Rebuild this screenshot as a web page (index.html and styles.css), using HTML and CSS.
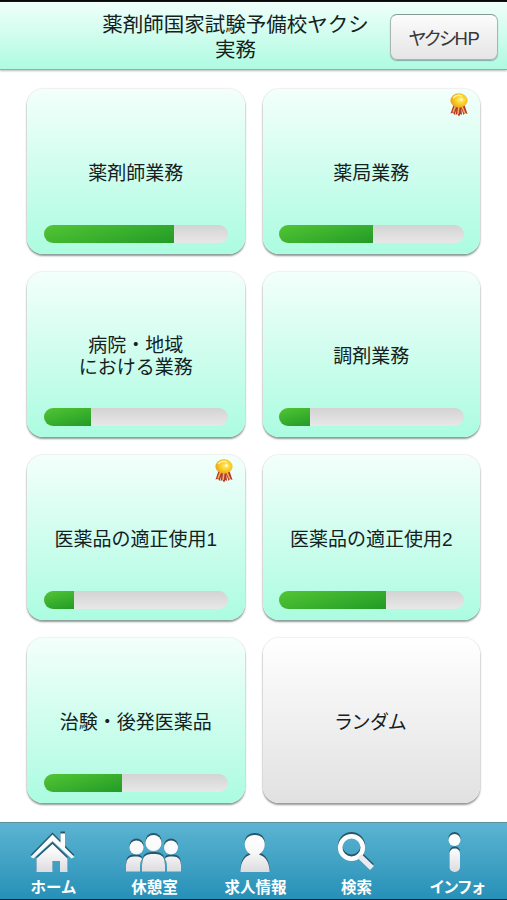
FILE: index.html
```html
<!DOCTYPE html>
<html lang="ja">
<head>
<meta charset="utf-8">
<title>実務</title>
<link rel="stylesheet" href="styles.css">
</head>
<body>
<svg class="defs" width="0" height="0" aria-hidden="true">
  <defs>
    <linearGradient id="silver" gradientUnits="userSpaceOnUse" x1="0" y1="3" x2="0" y2="42"><stop offset="0" stop-color="#fff"/><stop offset=".45" stop-color="#fafafa"/><stop offset="1" stop-color="#dcdce0"/></linearGradient>
    <radialGradient id="gold" cx=".6" cy=".45" r=".6"><stop offset="0" stop-color="#fff08a"/><stop offset=".45" stop-color="#fbd32c"/><stop offset="1" stop-color="#eba31a"/></radialGradient>
    <symbol id="medal" viewBox="0 0 20 24">
      <path d="M4.500 12L1.500 20.500L4 19.800L5.500 22L8.500 14ZM8 13L6.500 22L8.500 21L10 23.500L11.500 21L13 22L12 13ZM11.500 13L14.500 22L16 20L18.500 21L15.500 12Z" fill="#b5382a"/>
      <path d="M6.500 13L4 19.500M9.800 14L9 21M12.800 13L15.800 20" stroke="#f0b05a" stroke-width="1.600"/>
      <ellipse cx="10" cy="7.500" rx="8.600" ry="7.200" fill="url(#gold)"/>
      <path d="M4 5Q8 1 13 3" stroke="#fff3a8" stroke-width="1.500" fill="none"/>
      <circle cx="12.500" cy="6.500" r="1.300" fill="#fffbd8"/>
    </symbol>
  </defs>
</svg>
<div class="app">
  <header class="header">
    <h1 class="title">薬剤師国家試験予備校ヤクシ<br>実務</h1>
    <button class="site">ヤクシ<span class="latin">HP</span></button>
  </header>
  <main class="grid">
    <a class="card"><span class="name">薬剤師業務</span><span class="bar"><i class="fill" style="width:130.500px"></i></span></a>
    <a class="card"><svg class="medal"><use href="#medal"/></svg><span class="name">薬局業務</span><span class="bar"><i class="fill" style="width:93.500px"></i></span></a>
    <a class="card"><span class="name">病院・地域<br>における業務</span><span class="bar"><i class="fill" style="width:47px"></i></span></a>
    <a class="card"><span class="name">調剤業務</span><span class="bar"><i class="fill" style="width:30.500px"></i></span></a>
    <a class="card"><svg class="medal"><use href="#medal"/></svg><span class="name">医薬品の適正使用1</span><span class="bar"><i class="fill" style="width:30px"></i></span></a>
    <a class="card"><span class="name">医薬品の適正使用2</span><span class="bar"><i class="fill" style="width:107px"></i></span></a>
    <a class="card"><span class="name">治験・後発医薬品</span><span class="bar"><i class="fill" style="width:78.500px"></i></span></a>
    <a class="card random"><span class="name kana">ランダム</span></a>
  </main>
  <nav class="tabs">
    <a class="tab"><svg class="icon" viewBox="0 0 60 44" fill="url(#silver)"><path d="M6.500 27L28.500 4.500L36.500 12.500V3.500H41V17.500L50.500 27L47.500 28.500L28.500 11L9.500 28.500Z"/><path d="M12.500 28.500L28.500 14L43.500 28.500V42H36V31H28.500V42H12.500Z"/></svg><span>ホーム</span></a>
    <a class="tab"><svg class="icon shift" viewBox="0 0 60 44" fill="url(#silver)"><circle cx="12.500" cy="17.500" r="7"/><circle cx="47" cy="17.500" r="7"/><path d="M2 41.500V35Q2 26.500 10 26.500H13Q17 26.500 18 29Q16 31.500 16 37V41.500ZM57 41.500V35Q57 26.500 49 26.500H46Q42 26.500 41 29Q43 31.500 43 37V41.500Z"/><circle cx="29.500" cy="13" r="8"/><path d="M18 41.500V35Q18 24 27 24H32Q41 24 41 35V41.500Z"/></svg><span>休憩室</span></a>
    <a class="tab"><svg class="icon shift" viewBox="0 0 60 44" fill="url(#silver)"><path d="M15.500 42C15.500 31 20 26.500 25.500 24.500C17 19 17.500 5 29.800 5C42 5 42.500 19 34 24.500C40 26.500 44.500 31 44.500 42Z"/></svg><span>求人情報</span></a>
    <a class="tab"><svg class="icon shift" viewBox="0 0 60 44"><circle cx="25.500" cy="17.500" r="11.300" fill="none" stroke="#fcfcfc" stroke-width="4.600"/><path d="M33.500 26L46 38" stroke="#e9e9ee" stroke-width="5.500"/></svg><span>検索</span></a>
    <a class="tab"><svg class="icon" viewBox="0 0 60 44" fill="url(#silver)"><circle cx="26.500" cy="10" r="6"/><rect x="21.500" y="18.500" width="10.500" height="23.500" rx="5"/></svg><span class="info">インフォ</span></a>
  </nav>
</div>
</body>
</html>
```

FILE: styles.css
```css
* { box-sizing: border-box; }
body {
  margin: 0;
  background: #fff;
  color: #14211e;
  font-family: "Liberation Sans", "Noto Sans CJK JP", sans-serif;
}
.defs { display: block; height: 0; }
.app {
  width: 507px;
  height: 900px;
  display: flex;
  flex-direction: column;
  border-top: 2px solid #080808;
  border-bottom: 1px solid #10212a;
}
.header {
  height: 68px;
  flex: none;
  display: grid;
  grid-template-columns: 390px 108px;
  padding-top: 10px;
  background: linear-gradient(#f0fffa, #aefbe1);
  border-bottom: 1px solid #83b9aa;
  box-shadow: 0 1px 2px #bbb;
}
.title {
  margin: 0;
  padding: 1px 0 0 81px;
  font-size: 20.5px;
  font-weight: 400;
  line-height: 24.500px;
  text-align: center;
  white-space: nowrap;
}
.site {
  height: 46px;
  margin-top: 2px;
  padding: 0;
  border: 1px solid #aab5b2;
  border-top-color: #8b9995;
  border-radius: 7px;
  background: linear-gradient(#fcfcfc, #e5e5e5);
  box-shadow: 0 1px 1px #8aa;
  font: 400 18.500px "Liberation Sans", "Noto Sans CJK JP", sans-serif;
  font-feature-settings: "palt";
  letter-spacing: -1.700px;
  color: #383838;
}
.latin { letter-spacing: -.300px; }
.grid {
  flex: 1;
  display: grid;
  grid-template-columns: 217.500px 217.500px;
  grid-template-rows: repeat(4, 165px);
  gap: 18px;
  padding: 19px 0 0 27px;
}
.card {
  position: relative;
  display: flex;
  flex-direction: column;
  padding: 0 16.500px 11px;
  border-radius: 16px;
  background: linear-gradient(#f3fffb, #abfce0);
  box-shadow: 0 2px 2px #8d9b98, 0 0 2px #c4cfcc;
}
.name {
  flex: 1;
  display: flex;
  align-items: center;
  justify-content: center;
  padding-top: 34px;
  font-size: 19px;
  line-height: 22px;
  text-align: center;
  white-space: nowrap;
}
.bar {
  height: 18px;
  overflow: hidden;
  border-radius: 9px;
  background: linear-gradient(#d3d3d3, #e8e8e8);
}
.fill {
  display: block;
  height: 100%;
  background: linear-gradient(165deg, #52c634, #229b27);
}
.random {
  padding-bottom: 29px;
  background: linear-gradient(#fff, #e1e1e1);
  box-shadow: 0 2px 2px #999, 0 0 2px #ccc;
}
.kana { font-feature-settings: "palt"; letter-spacing: .8px; }
.medal {
  position: absolute;
  top: 4px;
  right: 11px;
  width: 20px;
  height: 24px;
}
.tabs {
  height: 77px;
  flex: none;
  display: grid;
  grid-template-columns: repeat(5, 101px);
  padding: 7px 0 0 3px;
  border-top: 1px solid #5d8f9f;
  background: linear-gradient(#5cb4d2, #2790b7);
}
.tab {
  display: flex;
  flex-direction: column;
  align-items: center;
  color: #fff;
  font-size: 15.500px;
  font-weight: 700;
  line-height: 28px;
  white-space: nowrap;
}
.icon {
  width: 60px;
  height: 44px;
  filter: drop-shadow(0 -1.500px .5px #28576b);
}
.shift { margin-right: 2px; }
.info { font-feature-settings: "palt"; letter-spacing: .3px; }
```
